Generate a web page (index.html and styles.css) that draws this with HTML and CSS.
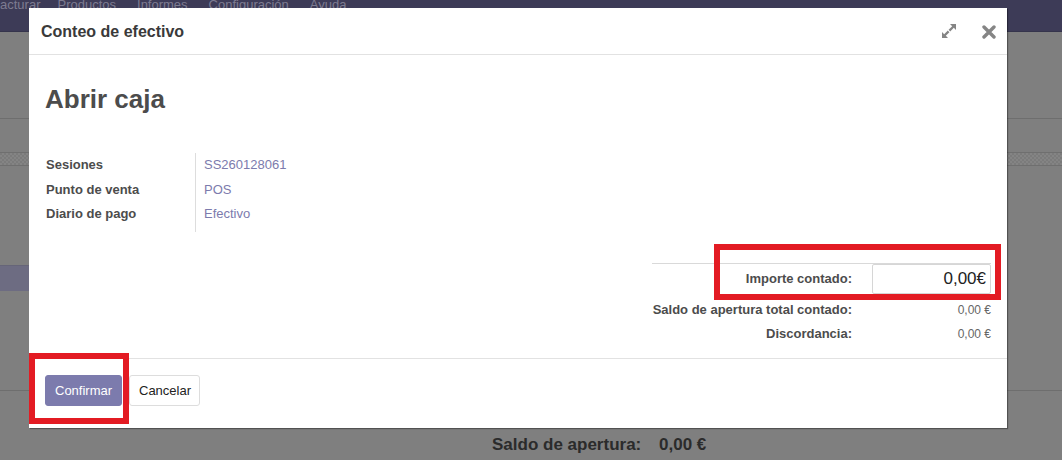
FILE: index.html
```html
<!DOCTYPE html>
<html>
<head>
  <title>Conteo de efectivo</title>
  <meta charset="UTF-8">
  <link rel="stylesheet" href="styles.css">
</head>
<body>
  <div id="navbar">
    <span class="menu first">acturar</span>
    <span class="menu">Productos</span>
    <span class="menu">Informes</span>
    <span class="menu">Configuración</span>
    <span class="menu">Ayuda</span>
  </div>
  <div id="backpage">
    <div class="panel-top"></div>
    <div class="panel-gap"></div>
    <div class="panel-checker"></div>
    <div class="panel-mid">
      <div class="side-item"></div>
    </div>
    <div class="panel-bottom">
      <span class="bottom-label">Saldo de apertura:</span>
      <span class="bottom-value">0,00 €</span>
    </div>
  </div>

  <div id="modal">
    <div class="modal-header">
      <h4 class="modal-title">Conteo de efectivo</h4>
      <div class="header-icons">
        <svg class="icon-expand" width="18" height="18" viewBox="0 0 18 18">
          <path d="M10 2h6v6l-2.2-2.2-3.6 3.6-1.6-1.6 3.6-3.6z" fill="#858585"/>
          <path d="M8 16H2v-6l2.2 2.2 3.6-3.6 1.6 1.6-3.6 3.6z" fill="#858585"/>
        </svg>
        <svg class="icon-close" width="14" height="14" viewBox="0 0 14 14">
          <path d="M2 2L12 12M12 2L2 12" stroke="#858585" stroke-width="3.4" stroke-linecap="round"/>
        </svg>
      </div>
    </div>

    <div class="modal-body">
      <h1 class="sheet-title">Abrir caja</h1>
      <div class="fields">
        <div class="field-labels">
          <div class="flabel">Sesiones</div>
          <div class="flabel">Punto de venta</div>
          <div class="flabel">Diario de pago</div>
        </div>
        <div class="field-values">
          <div class="fvalue">SS260128061</div>
          <div class="fvalue">POS</div>
          <div class="fvalue">Efectivo</div>
        </div>
      </div>

      <div class="totals">
        <div class="trow first-row">
          <div class="tlabel">Importe contado:</div>
          <div class="tvalue"><div class="amount-input">0,00€</div></div>
        </div>
        <div class="trow">
          <div class="tlabel">Saldo de apertura total contado:</div>
          <div class="tvalue small">0,00 €</div>
        </div>
        <div class="trow">
          <div class="tlabel">Discordancia:</div>
          <div class="tvalue small">0,00 €</div>
        </div>
        <div class="highlight-box amount-box"></div>
      </div>
    </div>

    <div class="modal-footer">
      <button class="btn btn-primary">Confirmar</button>
      <button class="btn btn-secondary">Cancelar</button>
      <div class="highlight-box confirm-box"></div>
    </div>
  </div>
</body>
</html>
```

FILE: styles.css
```css
html, body {
  margin: 0;
  padding: 0;
}

body {
  width: 1062px;
  height: 460px;
  overflow: hidden;
  background-color: #7f7f7f;
  font-family: "Liberation Sans", Arial, sans-serif;
  font-size: 13px;
  color: #4c4c4c;
  position: relative;
}

#navbar {
  height: 31px;
  background-color: #3d3b57;
  border-bottom: 1px solid #35344c;
  display: flex;
  align-items: flex-start;
  overflow: hidden;
}

.menu {
  color: #7d7c91;
  font-size: 13px;
  line-height: 13px;
  margin-top: -2px;
  margin-right: 21px;
  white-space: nowrap;
}

.menu.first {
  margin-left: 0;
  margin-right: 17px;
}

.panel-top {
  height: 86px;
  border-bottom: 1px solid #6e6e6e;
}

.panel-gap {
  height: 33px;
}

.panel-checker {
  height: 12px;
  border-top: 1px solid #6f6f6f;
  border-bottom: 1px solid #6f6f6f;
  background-color: #7b7b7b;
  background-image: linear-gradient(45deg, #848484 25%, transparent 25%, transparent 75%, #848484 75%),
    linear-gradient(45deg, #848484 25%, transparent 25%, transparent 75%, #848484 75%);
  background-size: 4px 4px;
  background-position: 0 0, 2px 2px;
}

.panel-mid {
  height: 225px;
  border-bottom: 1px solid #6e6e6e;
  padding-top: 99px;
  box-sizing: border-box;
}

.side-item {
  width: 200px;
  height: 25px;
  background-color: #6d6c82;
  border-top: 1px solid #666578;
}

.panel-bottom {
  padding-top: 44px;
  padding-left: 492px;
  font-size: 17px;
  font-weight: bold;
  color: #2b2b2b;
  line-height: 20px;
}

.bottom-value {
  margin-left: 13px;
}

#modal {
  position: absolute;
  left: 29px;
  top: 8px;
  width: 978px;
  height: 420px;
  background-color: #ffffff;
  box-shadow: 1px 1px 1px rgba(0, 0, 0, 0.35);
  display: flex;
  flex-direction: column;
}

.modal-header {
  height: 46px;
  border-bottom: 1px solid #e2e2e2;
  display: flex;
  align-items: center;
  justify-content: space-between;
  padding: 0 11px 0 12px;
}

.modal-title {
  margin: 0;
  font-size: 16px;
  font-weight: bold;
  color: #3a3a3a;
  padding-top: 2px;
}

.header-icons {
  display: flex;
  align-items: center;
  gap: 24px;
  padding-top: 2px;
}

.icon-expand {
  margin-top: -2px;
}

.modal-body {
  flex: 1;
  padding: 0 16px;
  position: relative;
}

.sheet-title {
  margin: 29px 0 0 0;
  font-size: 26px;
  line-height: 30px;
  color: #4c4c4c;
  font-weight: bold;
}

.fields {
  display: flex;
  margin-top: 39px;
  margin-left: 1px;
}

.field-labels {
  width: 149px;
  border-right: 1px solid #dddddd;
  padding: 2px 0 3px 0;
}

.flabel,
.fvalue {
  height: 24.5px;
  line-height: 20px;
}

.flabel {
  font-weight: bold;
  color: #4c4c4c;
}

.field-values {
  padding: 2px 0 0 8px;
}

.fvalue {
  color: #7c7bad;
}

.totals {
  position: relative;
  margin-top: 31px;
  margin-left: 607px;
  border-top: 1px solid #d9d9d9;
}

.trow {
  display: flex;
  height: 24px;
  align-items: center;
}

.trow.first-row {
  height: 30px;
  margin-bottom: 4px;
}

.tlabel {
  width: 200px;
  text-align: right;
  font-weight: bold;
  color: #4c4c4c;
  padding-right: 20px;
  white-space: nowrap;
}

.tvalue {
  flex: 1;
  text-align: right;
}

.tvalue.small {
  font-size: 12px;
  color: #666666;
}

.amount-input {
  border: 1px solid #d6d6d6;
  border-radius: 2px;
  font-size: 17px;
  line-height: 28px;
  color: #222222;
  padding-right: 4px;
  box-sizing: border-box;
  height: 30px;
}

.highlight-box {
  position: absolute;
  border: 6px solid #e31b23;
  box-sizing: border-box;
  pointer-events: none;
}

.amount-box {
  left: 62px;
  top: -20px;
  width: 287px;
  height: 56px;
}

.modal-footer {
  height: 70px;
  border-top: 1px solid #e2e2e2;
  padding: 16px 16px 0 16px;
  box-sizing: border-box;
  display: flex;
  align-items: flex-start;
  gap: 7px;
  position: relative;
}

.btn {
  height: 31px;
  font-family: "Liberation Sans", Arial, sans-serif;
  font-size: 13px;
  border-radius: 3px;
  padding: 0 9px;
  cursor: pointer;
}

.btn-primary {
  width: 77px;
  background-color: #7c7bad;
  border: 1px solid #7c7bad;
  color: #ffffff;
}

.btn-secondary {
  width: 71px;
  background-color: #ffffff;
  border: 1px solid #dddddd;
  color: #222222;
}

.confirm-box {
  left: 0;
  top: -6px;
  width: 100px;
  height: 71px;
}
```
